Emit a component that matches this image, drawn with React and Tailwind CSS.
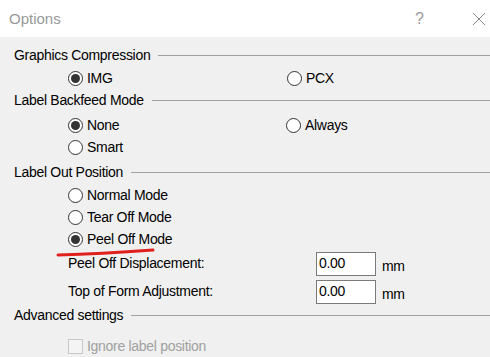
import React from 'react';

const Radio = ({ checked, label }) => (
  <div className="flex items-center gap-[4px]">
    <div className="w-[15px] h-[15px] rounded-full border border-[#333] bg-white flex items-center justify-center">
      {checked && <div className="w-[9px] h-[9px] rounded-full bg-[#333]" />}
    </div>
    <span>{label}</span>
  </div>
);

const Header = ({ title, className = '' }) => (
  <div className={`flex items-center h-[22px] ${className}`}>
    <span>{title}</span>
    <div className="flex-1 h-px bg-[#a0a0a0] ml-[8px]" />
  </div>
);

const Field = ({ label, className = '' }) => (
  <div className={`flex items-center h-[24px] pl-[54px] ${className}`}>
    <span className="w-[248px] -mt-[2px]">{label}</span>
    <div className="w-[60px] h-[24px] border border-[#7a7a7a] bg-white pl-[2px] flex items-center -mt-[1px]">0.00</div>
    <span className="ml-[6px] mt-[5px]">mm</span>
  </div>
);

export default function App() {
  return (
    <div
      className="w-[490px] h-[357px] overflow-hidden bg-[#f0f0f0] text-black relative"
      style={{ fontFamily: '"Liberation Sans", Arial, sans-serif' }}
    >
      {/* Title bar */}
      <div className="h-[37px] bg-white flex items-center pl-[9px] text-[15px] text-[#999]">
        <span className="flex-1 mt-[1px]">Options</span>
        <span className="mr-[48px] text-[16px] font-light">?</span>
        <svg width="14" height="14" viewBox="0 0 14 14" className="mr-[4px]">
          <path d="M1 1L13 13M13 1L1 13" stroke="#888" strokeWidth="1" />
        </svg>
      </div>

      <div className="flex flex-col pl-[14px] pt-[7px] text-[14px] tracking-[-0.3px]">
        <Header title="Graphics Compression" />
        <div className="flex items-center h-[22px] mt-[1px] pl-[54px]">
          <div className="w-[219px]"><Radio checked label="IMG" /></div>
          <Radio label="PCX" />
        </div>

        <Header title="Label Backfeed Mode" />
        <div className="flex items-center h-[22px] mt-[3px] pl-[54px]">
          <div className="w-[218px]"><Radio checked label="None" /></div>
          <Radio label="Always" />
        </div>
        <div className="flex items-center h-[22px] pl-[54px]">
          <Radio label="Smart" />
        </div>

        <Header title="Label Out Position" className="mt-[3px]" />
        <div className="flex items-center h-[22px] mt-[1px] pl-[54px]">
          <Radio label="Normal Mode" />
        </div>
        <div className="flex items-center h-[22px] pl-[54px]">
          <Radio label="Tear Off Mode" />
        </div>
        <div className="flex items-center h-[22px] pl-[54px]">
          <Radio checked label="Peel Off Mode" />
        </div>

        <Field label="Peel Off Displacement:" className="mt-[2px]" />
        <Field label="Top of Form Adjustment:" className="mt-[4px]" />

        <div className="flex items-center h-[20px] mt-[1px]">
          <span>Advanced settings</span>
          <div className="flex-1 h-px bg-[#a0a0a0] ml-[8px]" />
        </div>

        <div className="flex items-center h-[22px] mt-[10px] pl-[54px] text-[#a0a0a0]">
          <div className="w-[15px] h-[15px] border border-[#c8c8c8] bg-[#f4f4f4] mr-[4px]" />
          <span>Ignore label position</span>
        </div>
      </div>

      {/* red hand-drawn underline */}
      <svg className="absolute left-0 top-0 pointer-events-none" width="490" height="357">
        <path d="M58 255 Q100 254 153 250" stroke="#e0201c" strokeWidth="3" fill="none" strokeLinecap="round" />
      </svg>
    </div>
  );
}
